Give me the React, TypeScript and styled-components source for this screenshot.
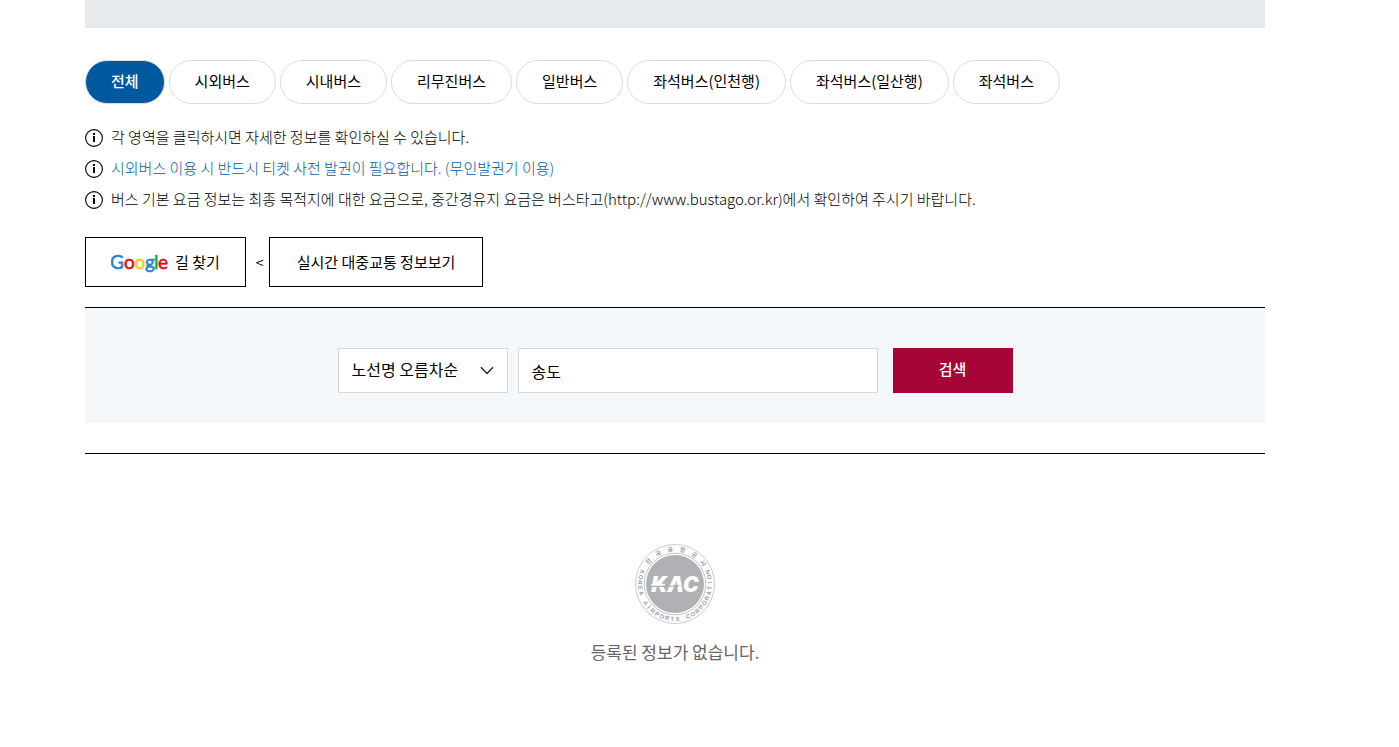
import React, { useState } from "react";
import styled, { createGlobalStyle } from "styled-components";

const GlobalStyle = createGlobalStyle`
  *, *::before, *::after { box-sizing: border-box; }
  body {
    margin: 0;
    background: #fff;
    color: #000;
    font-family: "Noto Sans CJK KR", "Noto Sans", sans-serif;
    font-size: 15px;
  }
  button, input, select { font: inherit; color: inherit; }
`;

const Page = styled.main`
  padding: 0 134px 72px 85px;
`;

const MapEdge = styled.div`
  height: 28px;
  background: #e6eaed;
`;

const Tabs = styled.nav`
  display: flex;
  flex-wrap: wrap;
  gap: 4px;
  margin-top: 32px;
`;

const Tab = styled.button<{ $active: boolean }>`
  height: 44px;
  padding: 0 25px 4px;
  border: 1px solid #ddd;
  border-radius: 22px;
  background: ${(p) => (p.$active ? "#00589f" : "#fff")};
  color: ${(p) => (p.$active ? "#fff" : "#000")};
  font-weight: ${(p) => (p.$active ? 500 : 400)};
  white-space: nowrap;
  cursor: pointer;
`;

const Notices = styled.ul`
  list-style: none;
  margin: 18px 0 0;
  padding: 0;
`;

const Notice = styled.li<{ $accent?: boolean }>`
  display: flex;
  align-items: center;
  gap: 8px;
  line-height: 31px;
  font-weight: 300;
  color: ${(p) => (p.$accent ? "#0060a8" : "#000")};

  svg { flex: none; }
`;

const NoticeText = styled.span`
  padding-bottom: 2px;
  line-height: 29px;
`;

const Links = styled.div`
  display: flex;
  align-items: center;
  margin: 22px 0 20px;
`;

const BoxLink = styled.a<{ $wide?: boolean }>`
  display: flex;
  align-items: center;
  justify-content: center;
  gap: 5px;
  height: 50px;
  padding: 0 ${(p) => (p.$wide ? 27 : 25)}px 2px;
  border: 1px solid #000;
  color: #000;
  text-decoration: none;
  white-space: nowrap;
`;

const Divider = styled.span`
  width: 23px;
  padding-left: 10px;
  font-size: 14px;
`;

const SearchBar = styled.form`
  display: flex;
  justify-content: center;
  padding: 40px 0 30px;
  border-top: 1px solid #000;
  background: #f4f8fb;
`;

const SelectWrap = styled.div`
  position: relative;
  width: 170px;
  margin-right: 10px;

  svg {
    position: absolute;
    right: 14px;
    top: 18px;
    pointer-events: none;
  }
`;

const SortSelect = styled.select`
  appearance: none;
  width: 100%;
  height: 45px;
  padding: 0 32px 4px 13px;
  border: 1px solid #d9d9d9;
  border-radius: 0;
  background: #fff;
  font-size: 16px;
`;

const Keyword = styled.input`
  flex: 0 1 360px;
  min-width: 0;
  height: 45px;
  margin-right: 15px;
  padding: 0 13px;
  border: 1px solid #d9d9d9;
  border-radius: 0;
  background: #fff;
  font-size: 16px;
`;

const SearchButton = styled.button`
  width: 120px;
  height: 45px;
  padding: 0 0 4px;
  border: 0;
  background: #a60535;
  color: #fff;
  font-weight: 500;
  cursor: pointer;
`;

const Results = styled.section`
  display: flex;
  flex-direction: column;
  align-items: center;
  margin-top: 30px;
  padding-top: 90px;
  border-top: 1px solid #000;
`;

const EmptyText = styled.p`
  margin: 15px 0 0;
  font-size: 17px;
  line-height: 26px;
  color: #666;
`;

const InfoIcon = () => (
  <svg width="18" height="18" viewBox="0 0 18 18" aria-hidden="true">
    <circle cx="9" cy="9" r="8.4" fill="none" stroke="#000" strokeWidth="1.1" />
    <rect x="8" y="4" width="2" height="2" fill="#000" />
    <rect x="8" y="7" width="2" height="6" fill="#000" />
  </svg>
);

const GoogleLogo = () => (
  <svg width="59" height="26" viewBox="0 0 59 26" role="img" aria-label="Google">
    <g fontFamily="Lato, sans-serif" fontSize="19" strokeWidth="0.6">
      <text x="-1" y="21" fill="#2a86cf" stroke="#2a86cf">G</text>
      <text x="13" y="21" fill="#e50a20" stroke="#e50a20">o</text>
      <text x="23.5" y="21" fill="#fbcb12" stroke="#fbcb12">o</text>
      <text x="34" y="21" fill="#2a86cf" stroke="#2a86cf">g</text>
      <text x="43" y="21" fill="#26a443" stroke="#26a443">l</text>
      <text x="47" y="21" fill="#e50a20" stroke="#e50a20">e</text>
    </g>
  </svg>
);

const SEAL_TOP = "한국공항공사".split("");
const SEAL_BOTTOM = "KOREA AIRPORTS CORPORATION".split("");

const KacLogo = () => (
  <svg width="80" height="80" viewBox="0 0 80 80" role="img" aria-label="KAC">
    <circle cx="40" cy="40" r="39.5" fill="#fff" stroke="#c4c5c8" strokeWidth="0.9" />
    <circle cx="40" cy="40" r="30.8" fill="none" stroke="#b5b6ba" strokeWidth="0.8" />
    <circle cx="40" cy="40" r="29" fill="#b0b1b5" />
    <g fill="#9c9da2" textAnchor="middle" fontWeight="700">
      {SEAL_TOP.map((ch, i) => (
        <text key={i} x="40" y="7.4" fontSize="6" transform={`rotate(${-49 + i * 20.6} 40 40)`}>
          {ch}
        </text>
      ))}
      {SEAL_BOTTOM.map((ch, i) =>
        ch === " " ? null : (
          <text
            key={i}
            x="40"
            y="77"
            fontSize="6"
            fontFamily="Liberation Sans, sans-serif"
            transform={`rotate(${110 - i * 8.8} 40 40)`}
          >
            {ch}
          </text>
        )
      )}
    </g>
    <text
      x="40"
      y="48"
      textAnchor="middle"
      fontFamily="Inter, sans-serif"
      fontSize="21"
      fontWeight="900"
      fontStyle="italic"
      fill="#fff"
    >
      KAC
    </text>
    <path d="M16 40.6H30" stroke="#fff" strokeWidth="1.6" />
    <path d="M15 42.4H32L44 41.6" fill="none" stroke="#b0b1b5" strokeWidth="1.1" />
    <path d="M37.5 45.2 39.6 41.4 43 41.2 42.4 45.2Z" fill="#b0b1b5" />
  </svg>
);

const TABS = [
  "전체",
  "시외버스",
  "시내버스",
  "리무진버스",
  "일반버스",
  "좌석버스(인천행)",
  "좌석버스(일산행)",
  "좌석버스",
];

const NOTICES = [
  { text: "각 영역을 클릭하시면 자세한 정보를 확인하실 수 있습니다." },
  { text: "시외버스 이용 시 반드시 티켓 사전 발권이 필요합니다. (무인발권기 이용)", accent: true },
  {
    text: "버스 기본 요금 정보는 최종 목적지에 대한 요금으로, 중간경유지 요금은 버스타고(http://www.bustago.or.kr)에서 확인하여 주시기 바랍니다.",
  },
];

export default function App() {
  const [active, setActive] = useState(TABS[0]);
  const [keyword, setKeyword] = useState("송도");

  return (
    <>
      <GlobalStyle />
      <Page>
        <MapEdge />
        <Tabs aria-label="버스 종류">
          {TABS.map((name) => (
            <Tab key={name} type="button" $active={name === active} onClick={() => setActive(name)}>
              {name}
            </Tab>
          ))}
        </Tabs>
        <Notices>
          {NOTICES.map((n) => (
            <Notice key={n.text} $accent={n.accent}>
              <InfoIcon />
              <NoticeText>{n.text}</NoticeText>
            </Notice>
          ))}
        </Notices>
        <Links>
          <BoxLink href="#directions">
            <GoogleLogo />
            길 찾기
          </BoxLink>
          <Divider>&lt;</Divider>
          <BoxLink href="#live" $wide>
            실시간 대중교통 정보보기
          </BoxLink>
        </Links>
        <SearchBar onSubmit={(e) => e.preventDefault()}>
          <SelectWrap>
            <SortSelect aria-label="정렬">
              <option>노선명 오름차순</option>
              <option>노선명 내림차순</option>
            </SortSelect>
            <svg width="14" height="9" viewBox="0 0 14 9" aria-hidden="true">
              <path d="M1 1.2 7 7.4 13 1.2" fill="none" stroke="#222" strokeWidth="1.4" />
            </svg>
          </SelectWrap>
          <Keyword
            type="text"
            aria-label="검색어"
            value={keyword}
            onChange={(e) => setKeyword(e.target.value)}
          />
          <SearchButton type="submit">검색</SearchButton>
        </SearchBar>
        <Results>
          <KacLogo />
          <EmptyText>등록된 정보가 없습니다.</EmptyText>
        </Results>
      </Page>
    </>
  );
}
